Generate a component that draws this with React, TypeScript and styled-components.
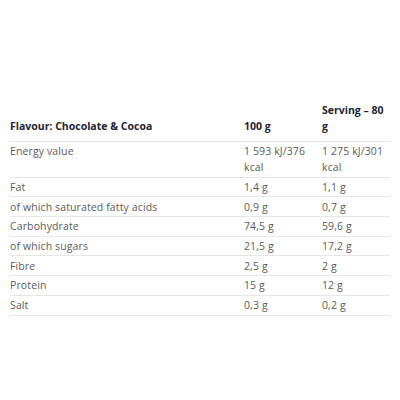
import styled, { createGlobalStyle } from "styled-components";

const Global = createGlobalStyle`
  html, body { margin: 0; padding: 0; background: #fff; }
  body { font-family: "Open Sans", "Liberation Sans", sans-serif; }
`;

const Page = styled.div`
  width: 400px;
  height: 400px;
  padding: 102px 10px 0;
  box-sizing: border-box;
`;

const Table = styled.table`
  width: 380px;
  border-collapse: collapse;
  table-layout: fixed;
`;

const Head = styled.th<{ $w: number }>`
  width: ${({ $w }) => $w}px;
  text-align: left;
  vertical-align: bottom;
  font-size: 10.5px;
  font-weight: 700;
  line-height: 16px;
  color: #1e2433;
  padding: 0 0 7px;
  border-bottom: 1px solid #e6e6e6;
`;

const Cell = styled.td`
  vertical-align: top;
  font-size: 10.5px;
  letter-spacing: 0.12px;
  line-height: 16px;
  color: #5a5a5a;
  padding: 1.35px 0;
  border-bottom: 1px solid #e6e6e6;
`;

const rows: [string, string, string][] = [
  ["Energy value", "1 593 kJ/376 kcal", "1 275 kJ/301 kcal"],
  ["Fat", "1,4 g", "1,1 g"],
  ["of which saturated fatty acids", "0,9 g", "0,7 g"],
  ["Carbohydrate", "74,5 g", "59,6 g"],
  ["of which sugars", "21,5 g", "17,2 g"],
  ["Fibre", "2,5 g", "2 g"],
  ["Protein", "15 g", "12 g"],
  ["Salt", "0,3 g", "0,2 g"],
];

export default function App() {
  return (
    <Page>
      <Global />
      <Table>
        <thead>
          <tr>
            <Head $w={234}>Flavour: Chocolate &amp; Cocoa</Head>
            <Head $w={78}>100 g</Head>
            <Head $w={68}>Serving – 80 g</Head>
          </tr>
        </thead>
        <tbody>
          {rows.map(([name, per100, serving]) => (
            <tr key={name}>
              <Cell>{name}</Cell>
              <Cell>{per100}</Cell>
              <Cell>{serving}</Cell>
            </tr>
          ))}
        </tbody>
      </Table>
    </Page>
  );
}
